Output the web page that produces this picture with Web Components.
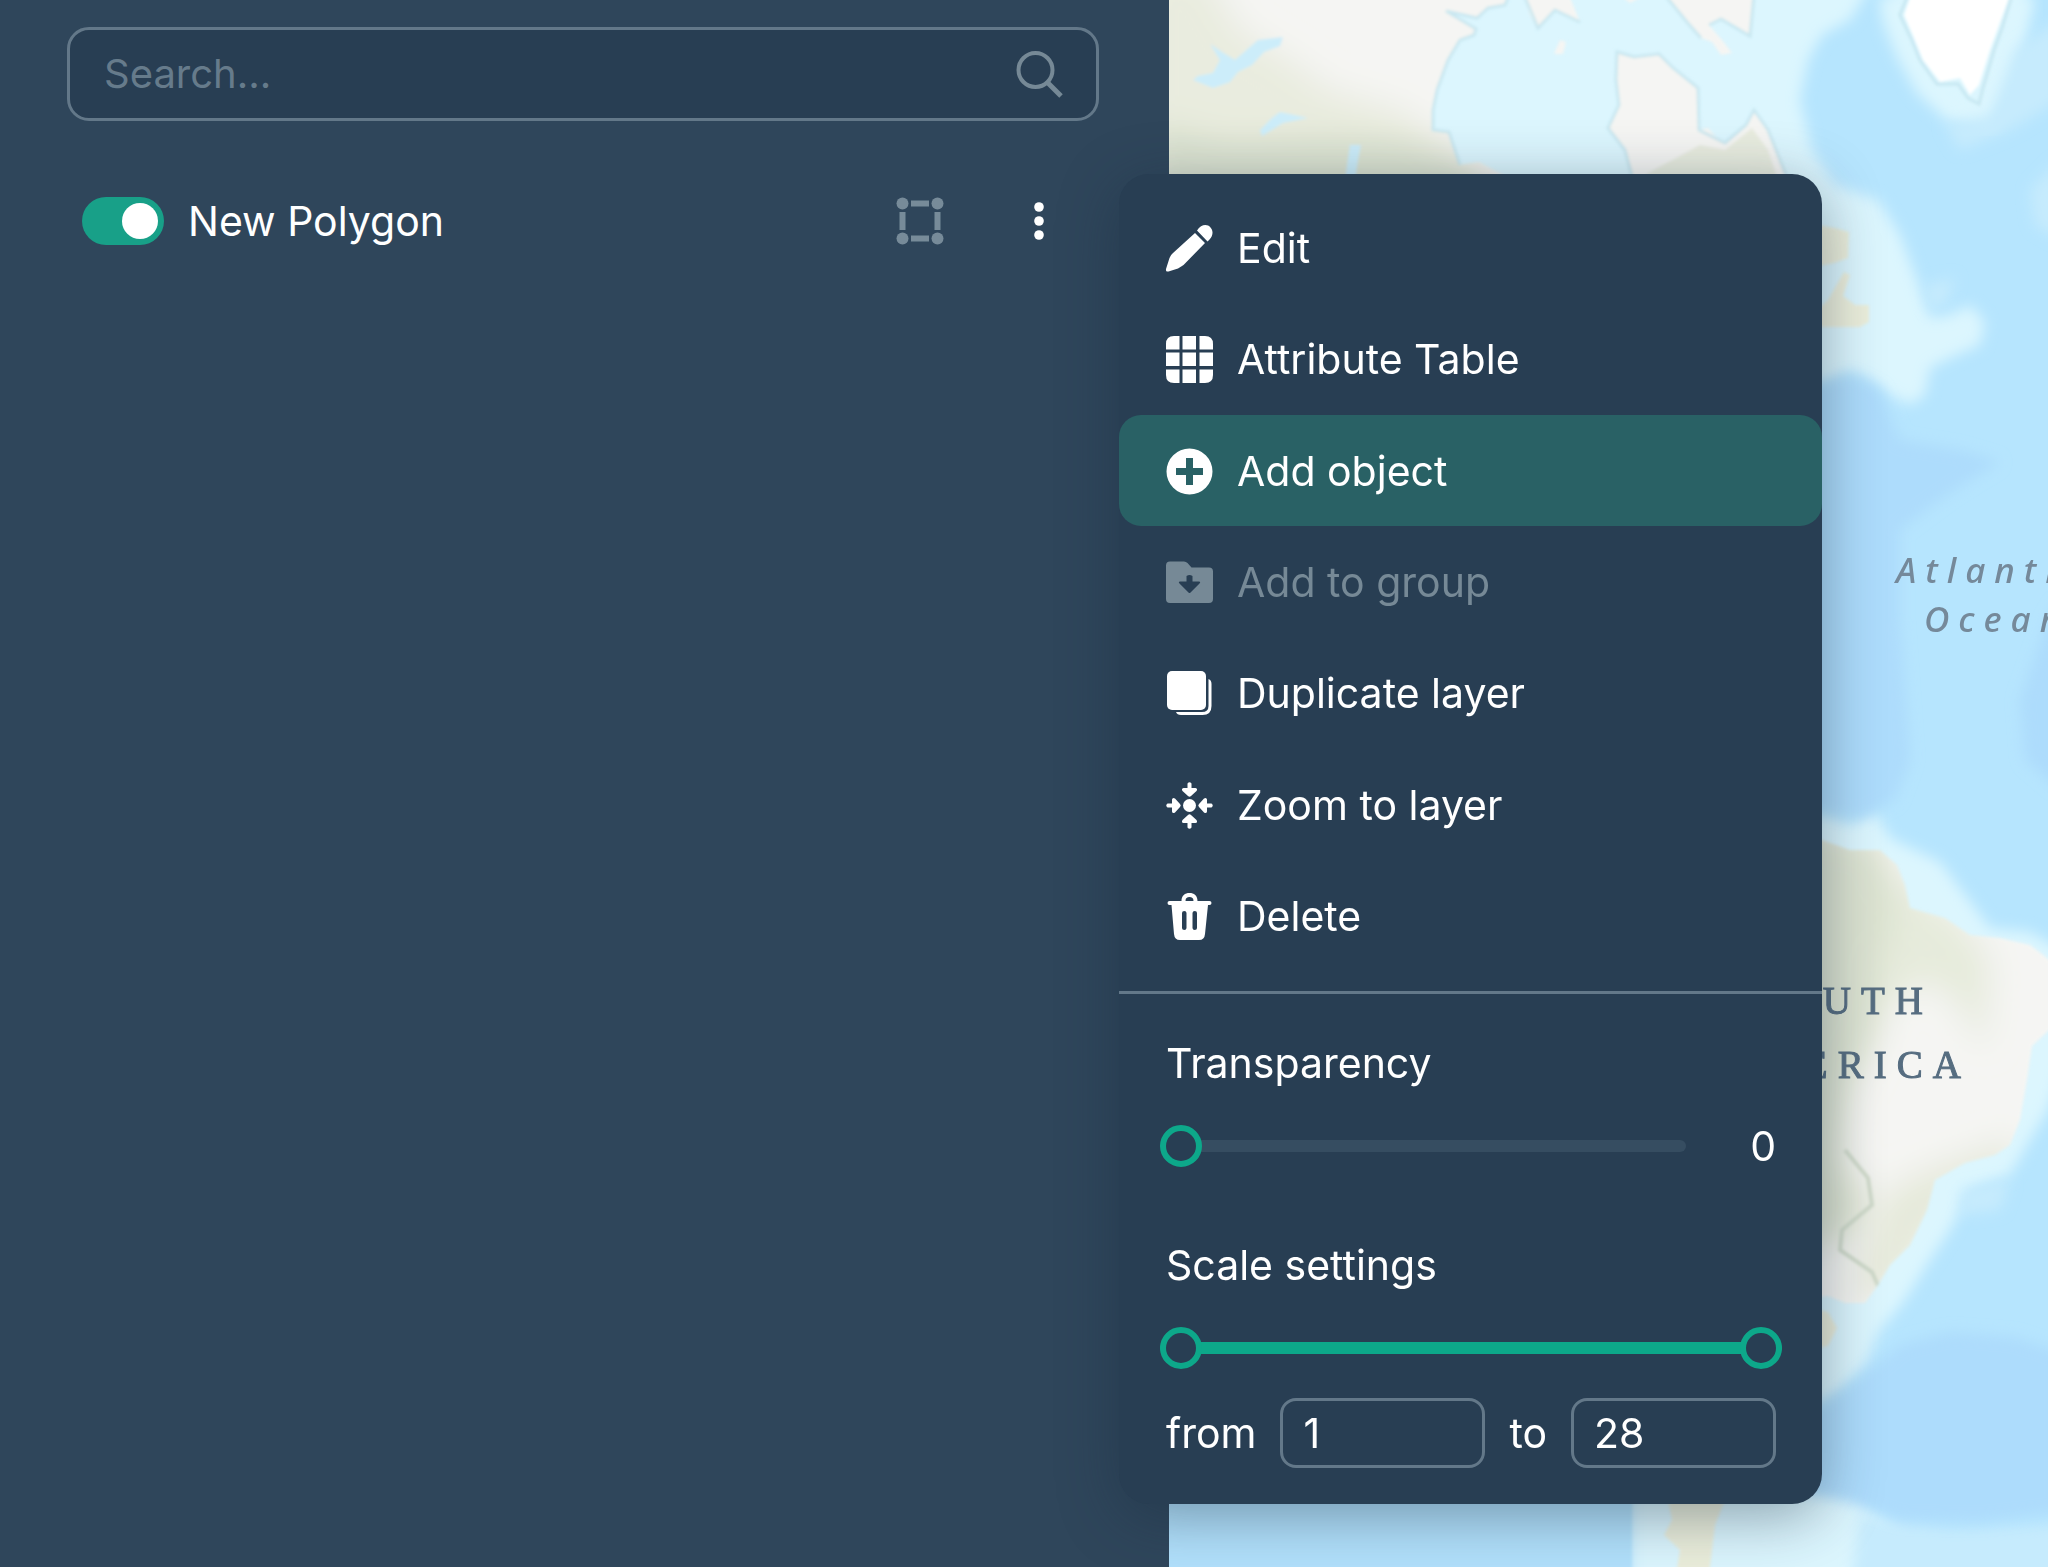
<!DOCTYPE html>
<html lang="en">
<head>
<meta charset="utf-8">
<title>Map layers</title>
<style>
  html, body { margin: 0; height: 100%; }
  body {
    --panel: #2f465b;
    --surface: #283e53;
    --line: #637889;
    --muted: #768996;
    --accent: #0da88a;
    --active: #296165;
    --track: #364d61;
    font: 400 41px/48px Inter, "Noto Sans", sans-serif;
    color: #fff;
    overflow: hidden;
  }
</style>
</head>
<body>
<map-workspace></map-workspace>

<script>
const define = (name, html, setup) => {
  const template = document.createElement('template');
  template.innerHTML = html;
  customElements.define(name, class extends HTMLElement {
    connectedCallback() {
      if (this.shadowRoot) return;
      this.attachShadow({ mode: 'open' }).append(template.content.cloneNode(true));
      if (setup) setup(this, this.shadowRoot);
    }
  });
};

const ARROW = 'M22.500 2.500q2-2.500 4 0v4.500h4q2.500.5 1 3L26 15q-1.500 1.500-3 0l-5.500-5q-1.500-2.500 1-3h4z';
const ICONS = {
  search: '<g fill="none" stroke="currentColor"><circle cx="19.500" cy="20" r="17" stroke-width="4"/><path d="M32 33 45 46" stroke-width="5"/></g>',
  polygon: '<circle cx="6.500" cy="6.500" r="6"/><circle cx="41.500" cy="6.500" r="6"/><circle cx="6.500" cy="41.500" r="6"/><circle cx="41.500" cy="41.500" r="6"/><path d="M15 3.500h18v6H15zM15 38.500h18v6H15zM3.500 15h6v18h-6zM38.500 15h6v18h-6z"/>',
  more: '<circle cx="23" cy="10" r="4.800"/><circle cx="23" cy="24" r="4.800"/><circle cx="23" cy="38" r="4.800"/>',
  edit: '<path d="M30 9 40 19 20 39.500Q18.500 41 17 42L13 44.500 3.500 47.500Q.5 48 1 45L4.500 34Q5.500 31 8 29ZM32 6.500C36 .5 42-.5 45.500 3.500S48 13 42.500 17.500Z"/>',
  table: '<path d="M1 14.500V9Q1 1 9 1h5.500v13.500zM17.500 1h13.500v13.500H17.500zM34.500 1H40q8 0 8 8v5.500H34.500zM1 17.500h13.500V31H1zM17.500 17.500h13.500V31H17.500zM34.500 17.500H48V31H34.500zM1 34.500h13.500V48H9q-8 0-8-8zM17.500 34.500h13.500V48H17.500zM34.500 34.500H48V40q0 8-8 8h-5.500z"/>',
  add: '<path fill-rule="evenodd" d="M24.500 1.500a23 23 0 1 0 0 46 23 23 0 0 0 0-46zM21 11h7v10h10v7H28v10h-7V28H11v-7h10z"/>',
  folder: '<path fill-rule="evenodd" d="M5 3.500h14q2 0 3.500 1.500l4 4.500H44q4 0 4 4V41q0 4-4 4H5q-4 0-4-4V7.500q0-4 4-4zM21.500 18v5.500H15q-2 0-.5 2l9 9q1 1 2 0l9-9q1.500-2-.5-2h-6.500V18q-3-2-6 0z"/>',
  duplicate: '<rect x="2" y="2" width="39" height="39" rx="5"/><path d="M43.500 10Q46.500 11 46.500 15V37q0 9-9 9H16q-4 0-5-3h26q6.500 0 6.500-6z"/>',
  zoom: '<circle cx="24.500" cy="24.500" r="6.500"/>' + [0, 90, 180, 270].map(a => `<path transform="rotate(${a} 24.500 24.500)" d="${ARROW}"/>`).join(''),
  trash: '<path fill-rule="evenodd" d="M16.500 9C16.500 3.500 20 1 24.500 1s8 2.500 8 8H44.500q2 0 2 2t-2 2H43L40 42q-.5 6-6 6H15q-5.500 0-6-6L6.500 13H4.500q-2 0-2-2t2-2zM20.500 9h8C28.500 6 27 5 24.500 5s-4 1-4 4zM17 21V36q0 2 2.250 2t2.250-2V21q0-2-2.250-2T17 21zM27.500 21V36q0 2 2.250 2t2.250-2V21q0-2-2.250-2t-2.250 2z"/>'
};

define('ui-icon', `
  <style>
    :host { display: block; flex: none; width: 48px; height: 48px; }
    svg { display: block; width: 100%; height: 100%; fill: currentColor; overflow: visible; }
  </style>
  <svg viewBox="0 0 48 48" aria-hidden="true"></svg>`,
  (host, root) => { root.querySelector('svg').innerHTML = ICONS[host.getAttribute('name')]; });

define('search-field', `
  <style>
    :host { display: block; }
    label {
      display: flex; align-items: center; box-sizing: border-box; height: 94px;
      padding: 0 32px 0 34px; border: 3px solid var(--line); border-radius: 22px;
      background: var(--surface); color: var(--muted);
    }
    input {
      flex: 1; min-width: 0; height: 48px; padding: 0; border: 0; outline: 0;
      background: none; color: #fff; font: inherit; font-size: 40px;
    }
    input::placeholder { color: #667b8b; opacity: 1; }
  </style>
  <label><input type="text" placeholder="Search..." aria-label="Search"><ui-icon name="search"></ui-icon></label>`);

define('layer-row', `
  <style>
    :host { display: flex; align-items: center; gap: 72px; padding: 0 35px 0 15px; }
    label { display: flex; align-items: center; gap: 24px; flex: 1; }
    input {
      appearance: none; box-sizing: border-box; flex: none; width: 82px; height: 48px;
      margin: 0; padding: 6px; border-radius: 24px; background: var(--line);
    }
    input::before {
      content: ""; display: block; width: 36px; height: 36px; border-radius: 50%; background: #fff;
    }
    input:checked { background: #18a088; }
    input:checked::before { margin-left: auto; }
    .kind { color: #778b99; }
    button { padding: 0; border: 0; background: none; color: inherit; font: inherit; }
  </style>
  <label><input type="checkbox" role="switch" checked><slot></slot></label>
  <ui-icon class="kind" name="polygon"></ui-icon>
  <button type="button" aria-label="Layer menu"><ui-icon name="more"></ui-icon></button>`);

define('layer-panel', `
  <style>
    :host {
      display: flex; flex-direction: column; gap: 76px; box-sizing: border-box;
      padding: 27px 70px 0 67px; background: var(--panel);
    }
  </style>
  <search-field></search-field>
  <layer-row>New Polygon</layer-row>`);

define('menu-item', `
  <style>
    :host { display: flex; }
    button {
      flex: 1; display: flex; align-items: center; gap: 24px; padding: 0 46px; border: 0;
      border-radius: 22px; background: none; color: #fff; font: inherit; text-align: left;
    }
    :host([active]) button { background: var(--active); }
    button:disabled { color: var(--muted); }
  </style>
  <button type="button"><ui-icon></ui-icon><slot></slot></button>`,
  (host, root) => {
    const icon = document.createElement('ui-icon');
    icon.setAttribute('name', host.getAttribute('icon'));
    root.querySelector('ui-icon').replaceWith(icon);
    root.querySelector('button').disabled = host.hasAttribute('disabled');
  });

const RANGE_STYLE = `
    input[type=range] {
      appearance: none; display: block; width: 100%; min-width: 0; height: 42px;
      margin: 0; background: none; outline: 0;
    }
    input[type=range]::-webkit-slider-runnable-track { height: 12px; border-radius: 6px; background: var(--fill); }
    input[type=range]::-webkit-slider-thumb {
      appearance: none; box-sizing: border-box; width: 42px; height: 42px; margin-top: -15px;
      border: 6px solid var(--accent); border-radius: 50%; background: var(--surface);
      pointer-events: auto;
    }`;

define('opacity-slider', `
  <style>
    :host { display: flex; flex-direction: column; gap: 35px; }
    div { display: flex; align-items: center; margin-left: -6px; }
    output { flex: none; width: 90px; text-align: right; }
    ${RANGE_STYLE}
    input[type=range] { --fill: var(--track); flex: 1; }
  </style>
  <label for="level"><slot></slot></label>
  <div><input id="level" type="range" min="0" max="100" value="0"><output for="level">0</output></div>`,
  (host, root) => {
    root.querySelector('input').addEventListener('input', e => { root.querySelector('output').value = e.target.value; });
  });

define('scale-range', `
  <style>
    :host { display: flex; flex-direction: column; }
    .track { display: grid; align-items: center; height: 48px; margin: 35px -6px 26px; }
    ${RANGE_STYLE}
    .track input { grid-area: 1 / 1; pointer-events: none; --fill: none; }
    .track input:first-child { --fill: var(--accent); }
    .limits { display: flex; align-items: center; gap: 24px; }
    .limits input {
      flex: 1; box-sizing: border-box; width: 0; height: 70px; padding: 0 20px;
      border: 3px solid var(--line); border-radius: 16px; outline: 0;
      background: none; color: #fff; font: inherit;
    }
  </style>
  <span><slot></slot></span>
  <div class="track">
    <input type="range" min="1" max="28" value="1" aria-label="Minimum scale">
    <input type="range" min="1" max="28" value="28" aria-label="Maximum scale">
  </div>
  <div class="limits">
    <label for="from">from</label><input id="from" type="text" inputmode="numeric" value="1">
    <label for="to">to</label><input id="to" type="text" inputmode="numeric" value="28">
  </div>`);

define('layer-menu', `
  <style>
    :host {
      display: block; box-sizing: border-box; width: 703px; padding: 18px 0 36px;
      border-radius: 30px; background: var(--surface);
      box-shadow: 0 12px 60px rgba(24, 44, 62, .42);
    }
    nav { display: grid; grid-auto-rows: 1fr; height: 780px; }
    hr { height: 3px; margin: 19px 0 45px; border: 0; background: var(--line); }
    section { display: flex; flex-direction: column; gap: 71px; padding: 0 46px 0 47px; }
  </style>
  <nav>
    <menu-item icon="edit">Edit</menu-item>
    <menu-item icon="table">Attribute Table</menu-item>
    <menu-item icon="add" active>Add object</menu-item>
    <menu-item icon="folder" disabled>Add to group</menu-item>
    <menu-item icon="duplicate">Duplicate layer</menu-item>
    <menu-item icon="zoom">Zoom to layer</menu-item>
    <menu-item icon="trash">Delete</menu-item>
  </nav>
  <hr>
  <section>
    <opacity-slider>Transparency</opacity-slider>
    <scale-range>Scale settings</scale-range>
  </section>`);

define('world-map', `
  <style>
    :host { display: block; overflow: hidden; background: #b6e5fe; }
    svg { display: block; width: 100%; height: 100%; }
    .ocean { font: italic 500 35px "Noto Sans", sans-serif; letter-spacing: 9px; fill: #75899a; }
    .land { font: 400 39px "Liberation Serif", serif; letter-spacing: 10px; fill: #566d80; stroke: #566d80; }
  </style>
  <svg viewBox="1169 0 879 1567" preserveAspectRatio="xMinYMin slice">
    <defs>
      <filter id="soft" x="-20%" y="-20%" width="140%" height="140%"><feGaussianBlur stdDeviation="7"/></filter>
      <filter id="edge" x="-5%" y="-5%" width="110%" height="110%"><feGaussianBlur stdDeviation="1.500"/></filter>
      <filter id="wash" x="-40%" y="-40%" width="180%" height="180%"><feGaussianBlur stdDeviation="16"/></filter>
      <clipPath id="north"><path d="M1160-10H1509L1505 5 1488 8 1477 18 1462 14 1446 11 1460 19 1476 29 1474 35 1460 40 1448 60 1437 90 1433 110V130L1449 132 1454 150 1460 165 1479 162 1505 176V200H1160Z"/></clipPath>
      <clipPath id="south"><path d="M1800 835 1822 840 1850 850 1880 850 1897 865 1905 885 1910 908 1945 918 1970 935 2000 938 2030 945 2060 968V1020L2032 1046 2027 1080 2020 1120 2010 1145 1995 1155 1965 1163 1935 1180 1927 1210 1910 1245 1890 1265 1878 1285 1865 1303 1845 1303 1828 1296 1800 1300Z"/></clipPath>
    </defs>

    <g filter="url(#soft)" fill="#dcf6fe">
      <path d="M1400-30H1880L1900 10 1915 50 1940 92 1975 118 2000 92 2012 40 2035-30H1880L1850 20 1822 35 1808 60 1800 100 1812 150 1835 185 1878 200 1900 235 1915 275 1930 318 1950 315 1970 305 1985 322 1980 345 1950 358 1930 368 1925 395 1910 405 1890 395 1870 378 1850 370 1800 392V200H1400Z"/>
      <path d="M1800 808 1850 825 1875 812 1890 838 1940 862 1975 908 1990 928 2030 932 2070 955V1050L2048 1110 2030 1140 2010 1175 1970 1190 1950 1230 1930 1260 1905 1300 1880 1330 1865 1365 1840 1390 1800 1415Z"/>
      <path d="M1631 1490H1850L1900 1535 1880 1600H1631Z"/>
    </g>
    <path filter="url(#soft)" fill="none" stroke="#dcf6fe" stroke-width="34" d="M1895-5 1900 20 1912 50 1930 82 1955 105 1982 112 1998 80 2008 40 2018-5"/>
    <g filter="url(#soft)" fill="#c6ebfd">
      <path d="M2015 50 2060 20V100L2010 130 1960 150 1945 125 1990 115Z"/>
      <path d="M2030 190 2060 160V240L2035 225Z"/>
      <path d="M1925 285 1955 278 1945 305 1930 310Z"/>
      <path d="M1860 1515 1950 1530 2070 1525V1590H1850Z"/>
      <path d="M1960 1190 2010 1180 2000 1210 1960 1215Z"/>
    </g>
    <g filter="url(#soft)" fill="#addcfc">
      <path d="M1800 392 1850 376 1880 390 1900 440 1960 450 2000 462 1970 480 1940 500 1900 530 1900 620 1910 760 1895 800 1860 818 1800 805Z"/>
      <path d="M2048 620 2060 600V790L2025 760 2020 700Z"/>
      <path d="M1870 1370 1900 1345 1950 1332 2015 1337 2060 1352V1512L1980 1522 1900 1520 1860 1505 1800 1490V1425Z"/>
    </g>

    <g filter="url(#edge)">
      <path fill="#b2e1fc" d="M1150 1480H1632V1600H1150Z"/>
      <g clip-path="url(#north)">
        <path fill="#f5f5f3" d="M1160-10H1520V200H1160Z"/>
        <g filter="url(#wash)">
          <path fill="#e9ecdf" d="M1140-30H1205L1240 30 1290 60 1330 90 1400 110 1460 150 1500 220H1140Z"/>
          <path fill="#dbe2d0" d="M1150 120 1230 140 1330 135 1400 140 1470 165 1500 210H1150Z"/>
        </g>
      </g>
      <g fill="#f5f5f3">
        <path d="M1524-5 1530 15 1538 28 1546 20 1555 10 1565 15 1580 22 1569-5Z"/>
        <path d="M1620-5 1630 3 1645-5Z"/>
        <path d="M1617 52 1634 57 1659 54 1673 68 1698 88 1699 130 1708 128 1715 136 1725 143 1746 125 1754 110 1768 130 1777 150 1788 180H1633L1625 150 1608 128 1619 105 1616 80Z"/>
        <path d="M1665-5 1687 22 1701 38 1712 42 1721 55 1732 53 1722 40 1709 25 1721 19 1736 27 1750 36 1754-5Z"/>
        <path d="M1560 40 1566 42 1563 54 1554 54Z"/>
      </g>
      <path fill="#e8ecdf" d="M1650 172 1700 145 1725 150 1752 128 1768 150 1778 180H1640Z"/>
      <path fill="#fff" d="M1911-5 1904 15 1914 38 1923 60 1940 82 1960 78 1970 95 1979 85 1990 50 1998 28 2010-5Z"/>
      <g fill="#ccedfa">
        <path d="M1210 44 1222 52 1235 60 1258 40 1283 37 1280 46 1264 52 1252 65 1238 72 1230 82 1213 88 1193 80 1198 76 1213 73 1220 60Z"/>
        <path d="M1260 130 1272 118 1280 112 1308 118 1283 123 1262 136Z"/>
        <path d="M1350 145H1361L1358 160 1355 180H1345Z"/>
      </g>
      <g fill="none" stroke="#c2e4ee" stroke-width="3" opacity=".8">
        <path d="M1509-5 1505 5 1488 8 1477 18 1446 11 1476 29 1474 35 1460 40 1448 60 1437 90 1433 110V130L1449 132 1460 165"/>
        <path d="M1633 180 1625 150 1608 128 1619 105 1616 80 1617 52 1634 57 1659 54 1673 68 1698 88 1699 130 1725 143 1746 125 1754 110 1768 130 1788 180"/>
        <path d="M1908-5 1900 15 1911 38 1920 60 1937 84 1958 84 1968 98 1979 104 1983 88 1994 50 2002 28 2012-5"/>
        <path d="M1665-5 1687 22 1701 38M1709 25 1721 19 1750 36 1754-5M1524-5 1538 28 1555 10 1580 22"/>
      </g>
      <g fill="#ebeedb">
        <path d="M1800 222 1835 228 1849 232 1848 258 1834 263 1800 270Z"/>
        <path d="M1800 325 1828 300 1844 272 1850 275 1843 296 1855 305 1869 305 1869 322 1860 327H1800Z"/>
        <path d="M1800 1305 1828 1312 1837 1328 1828 1346 1800 1352Z"/>
        <path d="M1668 1500H1725L1715 1525 1709 1575H1676L1680 1550 1664 1535 1672 1520Z"/>
      </g>
      <g clip-path="url(#south)">
        <path fill="#f5f5f3" d="M1790 820H2070V1320H1790Z"/>
        <g filter="url(#wash)">
          <path fill="#dbe2d0" d="M1780 820 1880 840 1905 900 1885 960 1880 1030 1850 1090 1840 1160 1870 1200 1850 1240 1780 1250Z"/>
          <path fill="#e6ebdc" d="M1900 880 1960 920 1990 960 1985 1050 1955 1000 1925 980 1880 1010Z"/>
          <path fill="#e5e9da" d="M1930 1170 2010 1140 2020 1170 1940 1220 1890 1300 1850 1290 1890 1190Z"/>
        </g>
        <path fill="none" stroke="#cdd8c8" stroke-width="4" d="M1845 1150 1868 1178 1872 1205 1842 1230 1840 1250 1872 1272 1880 1290"/>
      </g>
    </g>

    <text class="ocean" x="1896" y="583">Atlantic</text>
    <text class="ocean" x="1924" y="632">Ocean</text>
    <text class="land" x="1753" y="1014">SOUTH</text>
    <text class="land" x="1721" y="1078">AMERICA</text>
  </svg>`);

define('map-workspace', `
  <style>
    :host { display: flex; position: relative; height: 100vh; overflow: hidden; }
    layer-panel { flex: none; width: 1169px; }
    world-map { flex: 1; min-width: 0; }
    layer-menu { position: absolute; top: 174px; left: 1119px; }
  </style>
  <layer-panel></layer-panel>
  <world-map></world-map>
  <layer-menu></layer-menu>`);
</script>
</body>
</html>
